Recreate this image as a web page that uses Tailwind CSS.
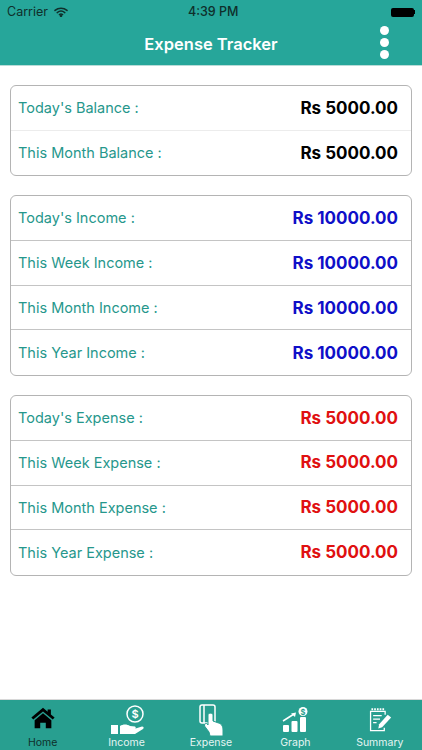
<!DOCTYPE html>
<html lang="en">
<head>
  <meta charset="UTF-8" />
  <meta name="viewport" content="width=device-width, initial-scale=1.0" />
  <title>Expense Tracker</title>
  <script src="https://cdn.jsdelivr.net/npm/@tailwindcss/browser@4"></script>
</head>
<body class="bg-white font-['Inter',sans-serif] w-[422px] h-[750px] overflow-hidden flex flex-col">
  <!-- status bar + nav -->
  <header class="h-[66px] bg-[#26a69a] border-b border-[#b9dcd8] flex flex-col shrink-0">
    <div class="h-[23px] pt-[1px] px-[7px] flex items-center justify-between text-[12.5px] text-[#0f2f2b] relative">
      <div class="flex items-center gap-[6px]">
        <span>Carrier</span>
        <svg width="14" height="10" viewBox="0 0 14 10" fill="none" stroke="#0f2f2b" stroke-width="1.5" stroke-linecap="round">
          <path d="M1 3.4C4.5 .4 9.5 .4 13 3.4" />
          <path d="M3.2 5.6C5.4 3.8 8.6 3.8 10.8 5.6" />
          <path d="M5.4 7.6C6.3 7 7.7 7 8.6 7.6" />
          <circle cx="7" cy="9" r=".5" fill="#0f2f2b" />
        </svg>
      </div>
      <span class="absolute left-[188px] font-medium">4:39 PM</span>
      <div class="flex items-center">
        <div class="w-[23px] h-[9px] bg-black rounded-[2px]"></div>
        <div class="w-[1.5px] h-[4px] bg-black"></div>
      </div>
    </div>
    <div class="flex-1 flex items-center relative">
      <h1 class="w-full text-center text-white text-[16.5px] font-semibold">Expense Tracker</h1>
      <div class="absolute left-[380px] top-[3px] flex flex-col gap-[3px]">
        <div class="w-[9px] h-[9px] rounded-full bg-white"></div>
        <div class="w-[9px] h-[9px] rounded-full bg-white"></div>
        <div class="w-[9px] h-[9px] rounded-full bg-white"></div>
      </div>
    </div>
  </header>

  <main class="flex-1 px-[10px] pt-[19px] flex flex-col gap-[19px]">
    <section class="border border-[#b4b4b4] rounded-[6px] divide-y divide-[#ececec]">
      <div class="h-[44.5px] px-[7px] flex items-center justify-between">
        <span class="text-[14.5px] text-[#26978c]">Today's Balance :</span>
        <span class="text-[17px] font-bold text-black pr-[6px] pt-[2px]">Rs 5000.00</span>
      </div>
      <div class="h-[44.5px] px-[7px] flex items-center justify-between">
        <span class="text-[14.5px] text-[#26978c]">This Month Balance :</span>
        <span class="text-[17px] font-bold text-black pr-[6px] pt-[2px]">Rs 5000.00</span>
      </div>
    </section>

    <section class="border border-[#b4b4b4] rounded-[6px] divide-y divide-[#c4c4c4]">
      <div class="h-[44.75px] px-[7px] flex items-center justify-between">
        <span class="text-[14.5px] text-[#26978c]">Today's Income :</span>
        <span class="text-[17px] font-bold text-[#0f0fc8] pr-[6px] pt-[2px]">Rs 10000.00</span>
      </div>
      <div class="h-[44.75px] px-[7px] flex items-center justify-between">
        <span class="text-[14.5px] text-[#26978c]">This Week Income :</span>
        <span class="text-[17px] font-bold text-[#0f0fc8] pr-[6px] pt-[2px]">Rs 10000.00</span>
      </div>
      <div class="h-[44.75px] px-[7px] flex items-center justify-between">
        <span class="text-[14.5px] text-[#26978c]">This Month Income :</span>
        <span class="text-[17px] font-bold text-[#0f0fc8] pr-[6px] pt-[2px]">Rs 10000.00</span>
      </div>
      <div class="h-[44.75px] px-[7px] flex items-center justify-between">
        <span class="text-[14.5px] text-[#26978c]">This Year Income :</span>
        <span class="text-[17px] font-bold text-[#0f0fc8] pr-[6px] pt-[2px]">Rs 10000.00</span>
      </div>
    </section>

    <section class="border border-[#b4b4b4] rounded-[6px] divide-y divide-[#c4c4c4]">
      <div class="h-[44.75px] px-[7px] flex items-center justify-between">
        <span class="text-[14.5px] text-[#26978c]">Today's Expense :</span>
        <span class="text-[17px] font-bold text-[#e01010] pr-[6px] pt-[2px]">Rs 5000.00</span>
      </div>
      <div class="h-[44.75px] px-[7px] flex items-center justify-between">
        <span class="text-[14.5px] text-[#26978c]">This Week Expense :</span>
        <span class="text-[17px] font-bold text-[#e01010] pr-[6px]">Rs 5000.00</span>
      </div>
      <div class="h-[44.75px] px-[7px] flex items-center justify-between">
        <span class="text-[14.5px] text-[#26978c]">This Month Expense :</span>
        <span class="text-[17px] font-bold text-[#e01010] pr-[6px]">Rs 5000.00</span>
      </div>
      <div class="h-[44.75px] px-[7px] flex items-center justify-between">
        <span class="text-[14.5px] text-[#26978c]">This Year Expense :</span>
        <span class="text-[17px] font-bold text-[#e01010] pr-[6px]">Rs 5000.00</span>
      </div>
    </section>
  </main>

  <!-- tab bar -->
  <nav class="h-[51px] bg-[#289f90] border-t border-[#d8d8d8] grid grid-cols-5 shrink-0 text-[10.5px] leading-[14px] text-[#e6f5f3]">
    <div class="flex flex-col items-center text-[#0f2f2b] ml-[1px]">
      <div class="h-[36px] pt-[7px]">
        <svg width="26" height="22" viewBox="0 0 28 26" preserveAspectRatio="none" fill="#000">
          <path d="M14 1 L1.5 12.5 L3.5 14.8 L14 5.2 L24.5 14.8 L26.5 12.5 L22.5 8.8 V3 H19 V5.6 Z" />
          <path d="M14 7.5 L5 15.6 V25 H11 V18.5 H17 V25 H23 V15.6 Z" />
        </svg>
      </div>
      <span>Home</span>
    </div>
    <div class="flex flex-col items-center">
      <div class="h-[36px] pt-[5px]">
        <svg width="34" height="29" viewBox="0 0 34 29" fill="none">
          <circle cx="25" cy="9" r="8" stroke="#fff" stroke-width="1.5" />
          <text x="25" y="13" text-anchor="middle" font-size="11" font-family="Inter, sans-serif" font-weight="600" fill="#fff">$</text>
          <rect x="1" y="20" width="7" height="9" fill="#fff" />
          <path d="M10 21 C13 19 17 19 20 21 L25 21.5 C26.5 22.5 25.5 24 24 24 L32 21.5 C34 21.5 34 23 33 24 L25 29 H10 Z" fill="#fff" />
        </svg>
      </div>
      <span>Income</span>
    </div>
    <div class="flex flex-col items-center">
      <div class="h-[36px] pt-[4px]">
        <svg width="26" height="32" viewBox="0 0 26 32" fill="none">
          <rect x="2" y="1" width="15" height="18" rx="2" stroke="#fff" stroke-width="1.5" />
          <path d="M6 1 V19" stroke="#fff" stroke-width="1.5" />
          <path d="M10 11 C10 8.5 15 8.5 15 11 V17 L20.5 19 C24 20 25 23 25 26 V32 H12 L11 28 L6.5 22 C6.5 18.5 9 19 10 21 Z" fill="#fff" stroke="#289f90" stroke-width="1" />
        </svg>
      </div>
      <span>Expense</span>
    </div>
    <div class="flex flex-col items-center">
      <div class="h-[36px] pt-[7px]">
        <svg width="26" height="25" viewBox="0 0 26 25" fill="none">
          <rect x="1" y="18" width="6" height="7" rx="1" fill="#fff" />
          <rect x="9.5" y="14" width="6" height="11" rx="1" fill="#fff" />
          <rect x="18" y="10" width="6" height="15" rx="1" fill="#fff" />
          <path d="M1 14 L12 7" stroke="#fff" stroke-width="1.5" />
          <path d="M9 6.5 L14 5.5 L13 10 Z" fill="#fff" />
          <circle cx="21" cy="4.5" r="4.5" fill="#fff" />
          <text x="21" y="7.5" text-anchor="middle" font-size="7.5" font-family="Inter, sans-serif" font-weight="700" fill="#289f90">$</text>
        </svg>
      </div>
      <span>Graph</span>
    </div>
    <div class="flex flex-col items-center">
      <div class="h-[36px] pt-[8px]">
        <svg width="24" height="24" viewBox="0 0 26 28" fill="none" stroke="#fff" stroke-width="1.5">
          <path d="M18 23 V26.5 H2 V4 H19 V8" />
          <path d="M3 1.5 H18" stroke-dasharray="2 1.2" stroke-width="2.5" />
          <path d="M5 9 H15 M5 13 H13 M5 17 H9" />
          <path d="M11 24 L12 19 L22 8 L26 11 L15.5 22.5 Z" fill="#fff" stroke="none" />
        </svg>
      </div>
      <span>Summary</span>
    </div>
  </nav>
</body>
</html>
